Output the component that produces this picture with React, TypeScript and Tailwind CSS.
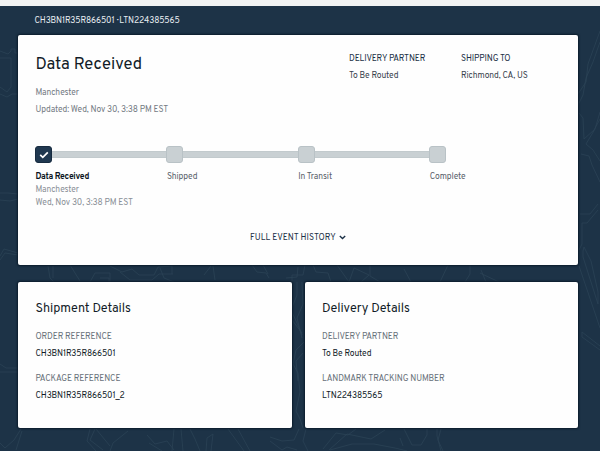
import { ReactNode } from "react";
import { clsx } from "clsx";

interface FieldProps {
  label: string;
  children: ReactNode;
  labelClass?: string;
  valueClass?: string;
}

interface Step {
  label: string;
  place?: string;
  time?: string;
  labelClass: string;
}

const STEPS: Step[] = [
  {
    label: "Data Received",
    place: "Manchester",
    time: "Wed, Nov 30, 3:38 PM EST",
    labelClass: "font-bold text-[#0b1522] tracking-[-0.29px]",
  },
  { label: "Shipped", labelClass: "text-[#59616a]" },
  { label: "In Transit", labelClass: "text-[#59616a]" },
  { label: "Complete", labelClass: "text-[#59616a]" },
];

// Contour lines of the page backdrop
const CONTOURS = [
  "M0 51l8 3 3-3v-2h4v4h3M0 58h11v29l-4 5-7-5M0 94l7 3 5-3h6",
  "M0 193l8 0 10 1M0 200l10 1 8-2M0 256l4-7 14 4M0 260l5-7 13 2M0 364l6 4h12M0 372h18",
  "M600 42l-7 20-7 16-3 17-6 12M600 31l-12 33-2 18-8 12M579 113l4 5 1 21 10-9 6-11M600 112l-5 17-9 15 7 6 7 11",
  "M581 154l8 2 3 9 8 17M598 204l-8 10h-10M598 210l-11 13h-5v21l-3 6",
  "M583 251l1-4 7 14 7 31v12M583 251v6l15 47M579 266l21 62M582 332l18 14M582 332v5l18 13",
  "M48 266l2 12 4 4M53 266v12M70 265l10 16M90 282l5-9h15v9M100 278h9v4M110 266l12 6 10-3 7 6h15l4-8 14-1M120 272l10 8h22l7-6h14M160 268l4 10 10 4M172 265v9",
  "M204 275l7-9M213 266l2 14M252 265l5 7 9 1 3 5M263 265l5 9M286 278l11-1 1-10M292 282v-7h11l2-10M313 265l3 7 12 1 3 9M337 265l12 17 5-14 15 7-8 7M370 265v11l10 6M404 269l7 13M448 265l-8 17M480 273l19 9M481 270l5 12M470 265v9l-5 8",
  "M297 282v13l-6 15 6 13 5 12M302 282l1 22-6 14 5 20M292 320l10 13M304 342l-8 8-3 14 5 9 2 19-4 19 4 8 3 9M303 353l-7 8 2 20",
  "M0 443l5 5 9-8 7-11M16 450l6-19M90 429l-3 12 9 10M95 429l-5 11 13 10M96 429l14 17M110 451l3-8 15-12M147 435l8 9 12-3 7 9M149 443l13 8M174 429l-2 22M181 429l2 22M190 429l5 10 5 12",
  "M206 451l1-13 6-4-2 17M228 429l16 22M238 429l12 22M270 437l12 4 12-1 5-11M270 441l12 9 5-3 10 3M306 429l-3 12 5 10M323 449l13-16 12 2 8-6M329 450l18-16 24 5 14-9M330 450l22-6h22l21 4 12 3",
  "M400 438l3 8M404 429l8 16h9l6-10v-6M437 429v7l4 15M441 429l-3 11 5 11",
];

function Field({ label, children, labelClass, valueClass }: FieldProps) {
  return (
    <div>
      <p className={clsx("h-[17px] whitespace-nowrap", labelClass)}>{label}</p>
      <p className={clsx("whitespace-nowrap", valueClass)}>{children}</p>
    </div>
  );
}

function Card({ className, children }: { className?: string; children: ReactNode }) {
  return (
    <section className={clsx("rounded-[2px] bg-[#fefefe] px-[17.5px] shadow-[0_0_2px_1px_#0b1c2c]", className)}>
      {children}
    </section>
  );
}

function Progress() {
  return (
    <div className="mt-[31px] grid h-[63px] w-[526px] grid-cols-[repeat(4,131.4px)]">
      {STEPS.map((step, index) => (
        <div key={step.label}>
          <div className="-ml-[0.5px] flex h-[17px] w-[131.4px] items-center">
            <div
              className={clsx(
                "flex size-[17px] shrink-0 items-center justify-center rounded-[3px] border",
                index === 0 ? "border-[#172b40] bg-[#203850]" : "border-[#b9c2c6] bg-[#c9d0d3]"
              )}
            >
              {index === 0 && (
                <svg viewBox="0 0 10 8" className="h-2 w-2.5" fill="none" stroke="white" strokeWidth="1.7">
                  <path d="M1.2 3.8 3.8 6.3 8.8 1.4" />
                </svg>
              )}
            </div>
            {index < STEPS.length - 1 && (
              <div className="h-[7px] flex-1 border-y border-[#c2cacd] bg-[#c9d0d3]" />
            )}
          </div>
          <p className={clsx("mt-[7px] h-[13px] whitespace-nowrap", step.labelClass)}>{step.label}</p>
          {step.place && <p className="h-[13px] text-[#8a9097]">{step.place}</p>}
          {step.time && <p className="whitespace-nowrap text-[#8a9097]">{step.time}</p>}
        </div>
      ))}
    </div>
  );
}

export default function App() {
  return (
    <div className="relative h-[451px] w-[600px] overflow-hidden border-t-[6px] border-[#f2f3f3] bg-[#1d3347] font-['Overpass','Roboto',sans-serif] text-[8.5px] leading-[13px] tracking-[-0.12px]">
      <svg
        className="absolute -top-[6px] left-0 h-[451px] w-[600px]"
        viewBox="0 0 600 451"
        fill="none"
        stroke="#2b4356"
        strokeWidth="0.8"
      >
        {CONTOURS.map((d) => (
          <path key={d} d={d} />
        ))}
      </svg>

      <div className="relative px-[18px]">
        <header className="h-[29px] pt-[8px] pl-[16.5px] whitespace-nowrap text-[#e8edf1]">
          CH3BN1R35R866501 <span className="font-['Roboto'] font-bold tracking-[0.3px]">·</span>LTN224385565
        </header>

        <Card className="h-[230px] w-[560px]">
          <div className="flex h-[80px] pt-[17px]">
            <div className="w-[313.5px]">
              <h1 className="h-[33.5px] pt-px text-[16.6px] leading-[24px] tracking-normal text-[#111b27]">
                Data Received
              </h1>
              <p className="h-[17px] text-[#747b83]">Manchester</p>
              <p className="text-[#747b83]">Updated: Wed, Nov 30, 3:38 PM EST</p>
            </div>
            <div className="flex">
              <div className="w-[112px]">
                <Field label="DELIVERY PARTNER" labelClass="text-[#1b3046]" valueClass="text-[#39424d]">
                  To Be Routed
                </Field>
              </div>
              <Field label="SHIPPING TO" labelClass="text-[#1b3046]" valueClass="text-[#39424d]">
                Richmond, CA, US
              </Field>
            </div>
          </div>
          <Progress />
          <button className="mt-[22px] ml-[214.5px] flex items-center gap-[3px] text-[#1b3046]">
            <span className="whitespace-nowrap tracking-[0.05px]">FULL EVENT HISTORY</span>
            <svg viewBox="0 0 7 5" className="h-[5px] w-[7px]" fill="none" stroke="currentColor" strokeWidth="1.4">
              <path d="M.8 1 3.5 3.5 6.2 1" />
            </svg>
          </button>
        </Card>

        <div className="mt-[17px] grid grid-cols-[274px_273px] gap-[13px]">
          <Card className="h-[146px] pt-[17px]">
            <h2 className="h-[31px] text-[12.6px] leading-[20px] tracking-[-0.04px] text-[#111b27]">
              Shipment Details
            </h2>
            <div className="flex flex-col gap-3">
              <Field label="ORDER REFERENCE" labelClass="text-[#68717a]" valueClass="text-[#111b27]">
                CH3BN1R35R866501
              </Field>
              <Field label="PACKAGE REFERENCE" labelClass="text-[#68717a]" valueClass="text-[#111b27]">
                CH3BN1R35R866501_2
              </Field>
            </div>
          </Card>
          <Card className="h-[146px] pt-[17px]">
            <h2 className="-ml-[0.5px] h-[31px] text-[12.6px] leading-[20px] tracking-[-0.04px] text-[#111b27]">
              Delivery Details
            </h2>
            <div className="-ml-[0.5px] flex flex-col gap-3">
              <Field label="DELIVERY PARTNER" labelClass="text-[#68717a]" valueClass="text-[#111b27]">
                To Be Routed
              </Field>
              <Field label="LANDMARK TRACKING NUMBER" labelClass="text-[#68717a]" valueClass="text-[#111b27]">
                LTN224385565
              </Field>
            </div>
          </Card>
        </div>
      </div>
    </div>
  );
}
